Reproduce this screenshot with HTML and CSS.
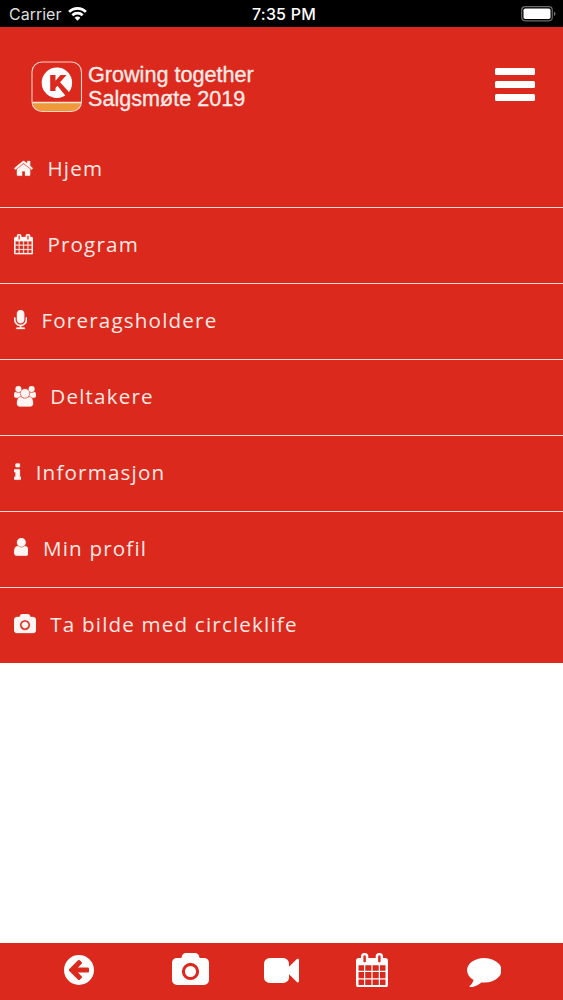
FILE: index.html
```html
<!DOCTYPE html>
<html lang="no">
<head>
<meta charset="utf-8">
<title>Growing together – Salgsmøte 2019</title>
<link rel="stylesheet" href="styles.css">
</head>
<body>
<svg class="defs" width="0" height="0" aria-hidden="true">
  <symbol id="camera" viewBox="0 0 1920 1792"><path d="M960 672q119 0 203.500 84.500t84.500 203.500-84.500 203.500-203.500 84.500-203.500-84.500-84.500-203.500 84.500-203.500 203.500-84.500zm704-416q106 0 181 75t75 181v896q0 106-75 181t-181 75h-1408q-106 0-181-75t-75-181v-896q0-106 75-181t181-75h224l51-136q19-49 69.500-84.500t103.500-35.500h512q53 0 103.500 35.500t69.500 84.500l51 136h224zm-704 1152q185 0 316.500-131.500t131.500-316.500-131.500-316.500-316.500-131.500-316.500 131.500-131.500 316.500 131.500 316.500 316.500 131.500z"/></symbol>
  <symbol id="calendar" viewBox="0 0 1664 1792"><path fill-rule="evenodd" d="M128 1664h288v-288H128zM480 1664h320v-288H480zM128 1312h288V992H128zM480 1312h320V992H480zM128 928h288V640H128zM864 1664h320v-288H864zM480 928h320V640H480zM1248 1664h288v-288h-288zM864 1312h320V992H864zM512 448V160q0-32-32-32h-64q-32 0-32 32v288q0 32 32 32h64q32 0 32-32zM1248 1312h288V992h-288zM864 928h320V640H864zM1248 928h288V640h-288zM1280 448V160q0-32-32-32h-64q-32 0-32 32v288q0 32 32 32h64q32 0 32-32zM1664 384v1280q0 52-38 90t-90 38H128q-52 0-90-38t-38-90V384q0-52 38-90t90-38h128v-96Q256 94 303 47T416 0h64q66 0 113 47t47 113v96h384v-96q0-66 47-113t113-47h64q66 0 113 47t47 113v96h128q52 0 90 38t38 90z"/></symbol>
</svg>

<header class="status">
  <div class="status-left">
    <span class="carrier">Carrier</span>
    <svg class="wifi" viewBox="0 0 18 13"><path d="M9 12.900l2.700-2.900a3.800 3.800 0 0 0-5.400 0z" fill="#fff"/><path d="M4.100 7.700a7 7 0 0 1 9.800 0M1 4.500a11.400 11.400 0 0 1 16 0" fill="none" stroke="#fff" stroke-width="2.500"/></svg>
  </div>
  <div class="clock">7:35 PM</div>
  <div class="status-right">
    <svg class="battery" viewBox="0 0 36 16"><rect x=".7" y=".7" width="30.600" height="14.100" rx="3.500" fill="none" stroke="#6b6b6b" stroke-width="1.200"/><rect x="2.500" y="2.500" width="27" height="10.500" rx="1.800" fill="#fff"/><path d="M33 5.500q1.500.7 1.500 2.300t-1.500 2.300z" fill="#777"/></svg>
  </div>
</header>

<section class="brand">
  <svg class="logo" viewBox="0 0 52 52">
    <path d="M2 42h48q0 8-9 8H11q-9 0-9-8z" fill="#ee9a3a"/>
    <path d="M1.500 41.500h49" stroke="#ffe6d8" stroke-width="1.700"/>
    <rect x="1" y="1" width="49.500" height="49.500" rx="10" fill="none" stroke="#ffd2c8" stroke-width="1.100"/>
    <circle cx="25.900" cy="21.700" r="15.200" fill="#fff"/>
    <path d="M19.200 14h5.300v5.800l5-5.800h6l-6.400 7.200 10.400 11.600-3.600 3.700-9.500-11.700-1.900 2.100v3.100h-5.300z" fill="#db291e"/>
  </svg>
  <div class="brand-text">Growing together<br>Salgsmøte 2019</div>
  <div class="burger"><i></i><i></i><i></i></div>
</section>

<nav class="menu">
  <a class="item"><svg class="w-calendar" viewBox="64 0 1664 1792"><path d="M1472 992v480q0 26-19 45t-45 19h-384v-384h-256v384h-384q-26 0-45-19t-19-45v-480q0-1 .5-3t.5-3l575-474 575 474q1 2 1 6zm223-69l-62 74q-8 9-21 11h-3q-13 0-21-7l-692-577-692 577q-12 8-24 7-13-2-21-11l-62-74q-8-10-7-23.500t11-21.500l719-599q32-26 76-26t76 26l244 204v-195q0-14 9-23t23-9h192q14 0 23 9t9 23v408l219 182q10 8 11 21.500t-7 23.500z"/></svg><span>Hjem</span></a>
  <a class="item"><svg class="w-calendar"><use href="#calendar"/></svg><span>Program</span></a>
  <a class="item"><svg class="w-mic" viewBox="320 0 1152 1792"><path d="M1472 704v128q0 221-147.500 384.500t-364.500 187.500v132h256q26 0 45 19t19 45-19 45-45 19h-640q-26 0-45-19t-19-45 19-45 45-19h256v-132q-217-24-364.500-187.500t-147.500-384.500v-128q0-26 19-45t45-19 45 19 19 45v128q0 185 131.500 316.500t316.500 131.500 316.500-131.500 131.500-316.500v-128q0-26 19-45t45-19 45 19 19 45zm-256-384v512q0 132-94 226t-226 94-226-94-94-226v-512q0-132 94-226t226-94 226 94 94 226z"/></svg><span>Foreragsholdere</span></a>
  <a class="item"><svg class="w-camera" viewBox="0 0 1920 1792"><circle cx="384" cy="256" r="256"/><circle cx="1536" cy="256" r="256"/><circle cx="960" cy="640" r="384"/><path d="M593 896q-162 5-265 128H194Q112 1024 56 983.500T0 865Q0 512 124 512q6 0 43.500 21t97.500 42.500T384 597q67 0 133-23-5 37-5 66 0 139 81 256zM1327 896q162 5 265 128h134q82 0 138-40.500t56-118.500q0-353-124-353-6 0-43.500 21t-97.500 42.500-119 21.500q-67 0-133-23 5 37 5 66 0 139-81 256zM1664 1533q0 120-73 189.500t-194 69.500H523q-121 0-194-69.500T256 1533q0-53 3.500-103.500t14-109T300 1212t43-97.500 62-81 85.500-53.500T602 960q10 0 43 21.500t73 48 107 48 135 21.500 135-21.500 107-48 73-48 43-21.500q61 0 111.500 20t85.500 53.500 62 81 43 97.500 26.500 108.500 14 109 3.500 103.500z"/></svg><span>Deltakere</span></a>
  <a class="item"><svg class="w-info" viewBox="0 0 640 1792"><path d="M640 1344v128q0 26-19 45t-45 19H64q-26 0-45-19t-19-45v-128q0-26 19-45t45-19h64V896H64q-26 0-45-19t-19-45V704q0-26 19-45t45-19h384q26 0 45 19t19 45v576h64q26 0 45 19t19 45zM512 192v192q0 26-19 45t-45 19H192q-26 0-45-19t-19-45V192q0-26 19-45t45-19h256q26 0 45 19t19 45z"/></svg><span>Informasjon</span></a>
  <a class="item"><svg class="w-user" viewBox="0 0 1280 1792"><path d="M1280 1271q0 109-62.500 187t-150.500 78H213q-88 0-150.500-78T0 1271q0-85 8.500-160.500t31.500-152 58.500-131 94-89T327 704q131 128 313 128t313-128q76 0 134.500 34.500t94 89 58.500 131 31.500 152T1280 1271zM1024 384q0 159-112.500 271.500T640 768 368.500 655.500 256 384t112.500-271.500T640 0t271.500 112.500T1024 384z"/></svg><span>Min profil</span></a>
  <a class="item"><svg class="w-camera"><use href="#camera"/></svg><span>Ta bilde med circleklife</span></a>
</nav>

<main class="content"></main>

<footer class="tabs">
  <svg class="tab-back" viewBox="0 0 1536 1536"><path fill-rule="evenodd" d="M768 0a768 768 0 1 0 0 1536A768 768 0 0 0 768 0zM1280 704v128q0 26-19 45t-45 19H714l189 189q19 19 19 45t-19 45l-91 91q-18 18-45 18t-45-18L360 904l-91-91q-18-18-18-45t18-45l91-91 362-362q18-18 45-18t45 18l91 91q18 18 18 45t-18 45L714 640h502q26 0 45 19t19 45z"/></svg>
  <svg class="tab-camera"><use href="#camera"/></svg>
  <svg class="tab-video" viewBox="0 288 1792 1216"><path d="M1792 352v1088q0 42-39 59-13 5-25 5-27 0-45-19l-403-403v166q0 119-84.500 203.500t-203.500 84.500h-704q-119 0-203.500-84.500t-84.500-203.500v-704q0-119 84.500-203.500t203.500-84.500h704q119 0 203.500 84.500t84.500 203.500v165l403-402q18-19 45-19 12 0 25 5 39 17 39 59z"/></svg>
  <svg class="tab-calendar"><use href="#calendar"/></svg>
  <svg class="tab-comment" viewBox="0 256 1792 1536"><path d="M1792 896q0 174-120 321.500t-326 233-450 85.500q-70 0-145-8-198 175-460 242-49 14-114 22-17 2-30.500-9t-17.500-29v-1q-3-4-.5-12t2-10 4.500-9.500l6-9 7-8.500 8-9q7-8 31-34.500t34.500-38 31-39.500 32.500-51 27-59 26-76q-157-89-247.500-220t-90.500-281q0-130 71-248.500t191-204.500 286-136.500 348-50.500q244 0 450 85.500t326 233 120 321.500z"/></svg>
</footer>
</body>
</html>
```

FILE: styles.css
```css
* { box-sizing: border-box; }
body {
  margin: 0;
  height: 1000px;
  display: flex;
  flex-direction: column;
  overflow: hidden;
  background: #fff;
  font-family: "Open Sans", "Noto Sans", sans-serif;
}
svg { display: block; fill: #fff; flex: none; }
.defs { display: none; }

.status {
  height: 27px;
  flex: none;
  display: grid;
  grid-template-columns: 1fr auto 1fr;
  align-items: center;
  padding: 2px 6px 0 9px;
  background: #000;
  color: #fff;
  font: 16px/24px Inter, Roboto, sans-serif;
}
.status-left { display: flex; align-items: center; gap: 6.500px; }
.carrier { color: #dedede; letter-spacing: 0; margin-top: -2px; }
.wifi { width: 19px; height: 14px; margin-top: -2px; }
.clock { font-weight: 500; letter-spacing: .2px; margin: -2px 0 0 2px; }
.status-right { display: flex; justify-content: flex-end; }
.battery { width: 36px; height: 16px; margin-top: -2px; }

.brand {
  height: 105px;
  flex: none;
  display: flex;
  align-items: flex-start;
  padding: 34px 28px 0 30.500px;
  background: #db291e;
}
.logo { width: 52px; height: 52px; }
.brand-text {
  margin: 1.500px 0 0 5.500px;
  color: #ffece8;
  font: 21.6px/24.500px "Liberation Sans", Arial, sans-serif;
  -webkit-text-stroke: .3px #ffece8;
  white-space: nowrap;
}
.burger {
  margin: 6.500px 0 0 auto;
  width: 40px;
  display: flex;
  flex-direction: column;
  gap: 6.300px;
}
.burger i { height: 7px; border-radius: 1.500px; background: #fff; }

.menu { flex: none; background: #db291e; }
.item {
  height: 76px;
  display: flex;
  align-items: flex-start;
  gap: 14.800px;
  padding: 26px 0 0 13.500px;
  border-bottom: 1px solid #ffd6cf;
  color: #ffe9e4;
  font-size: 20.600px;
  line-height: 20px;
  letter-spacing: 1.180px;
  white-space: nowrap;
}
.item:last-child { border: 0; height: 75px; }
.item svg { height: 20.600px; fill: #fff5f2; stroke: #fff5f2; stroke-width: 24px; }
.w-calendar { width: 19.100px; }
.w-mic { width: 13.200px; }
.w-camera { width: 22px; }
.w-info { width: 7.400px; }
.w-user { width: 14.700px; }

.content { flex: 1; }

.tabs {
  height: 57.500px;
  flex: none;
  display: grid;
  grid-template-columns: 157.400px 67.200px 113.400px 67.200px 1fr;
  justify-items: center;
  align-items: start;
  padding-top: 10.500px;
  background: #db291e;
}
.tab-back { width: 30px; height: 30px; margin-top: 2px; }
.tab-camera { width: 37px; height: 34.500px; }
.tab-video { width: 35px; height: 25px; margin-top: 4.500px; }
.tab-calendar { width: 32px; height: 34.400px; }
.tab-comment { width: 34.500px; height: 29.500px; margin-top: 4.500px; }
```
